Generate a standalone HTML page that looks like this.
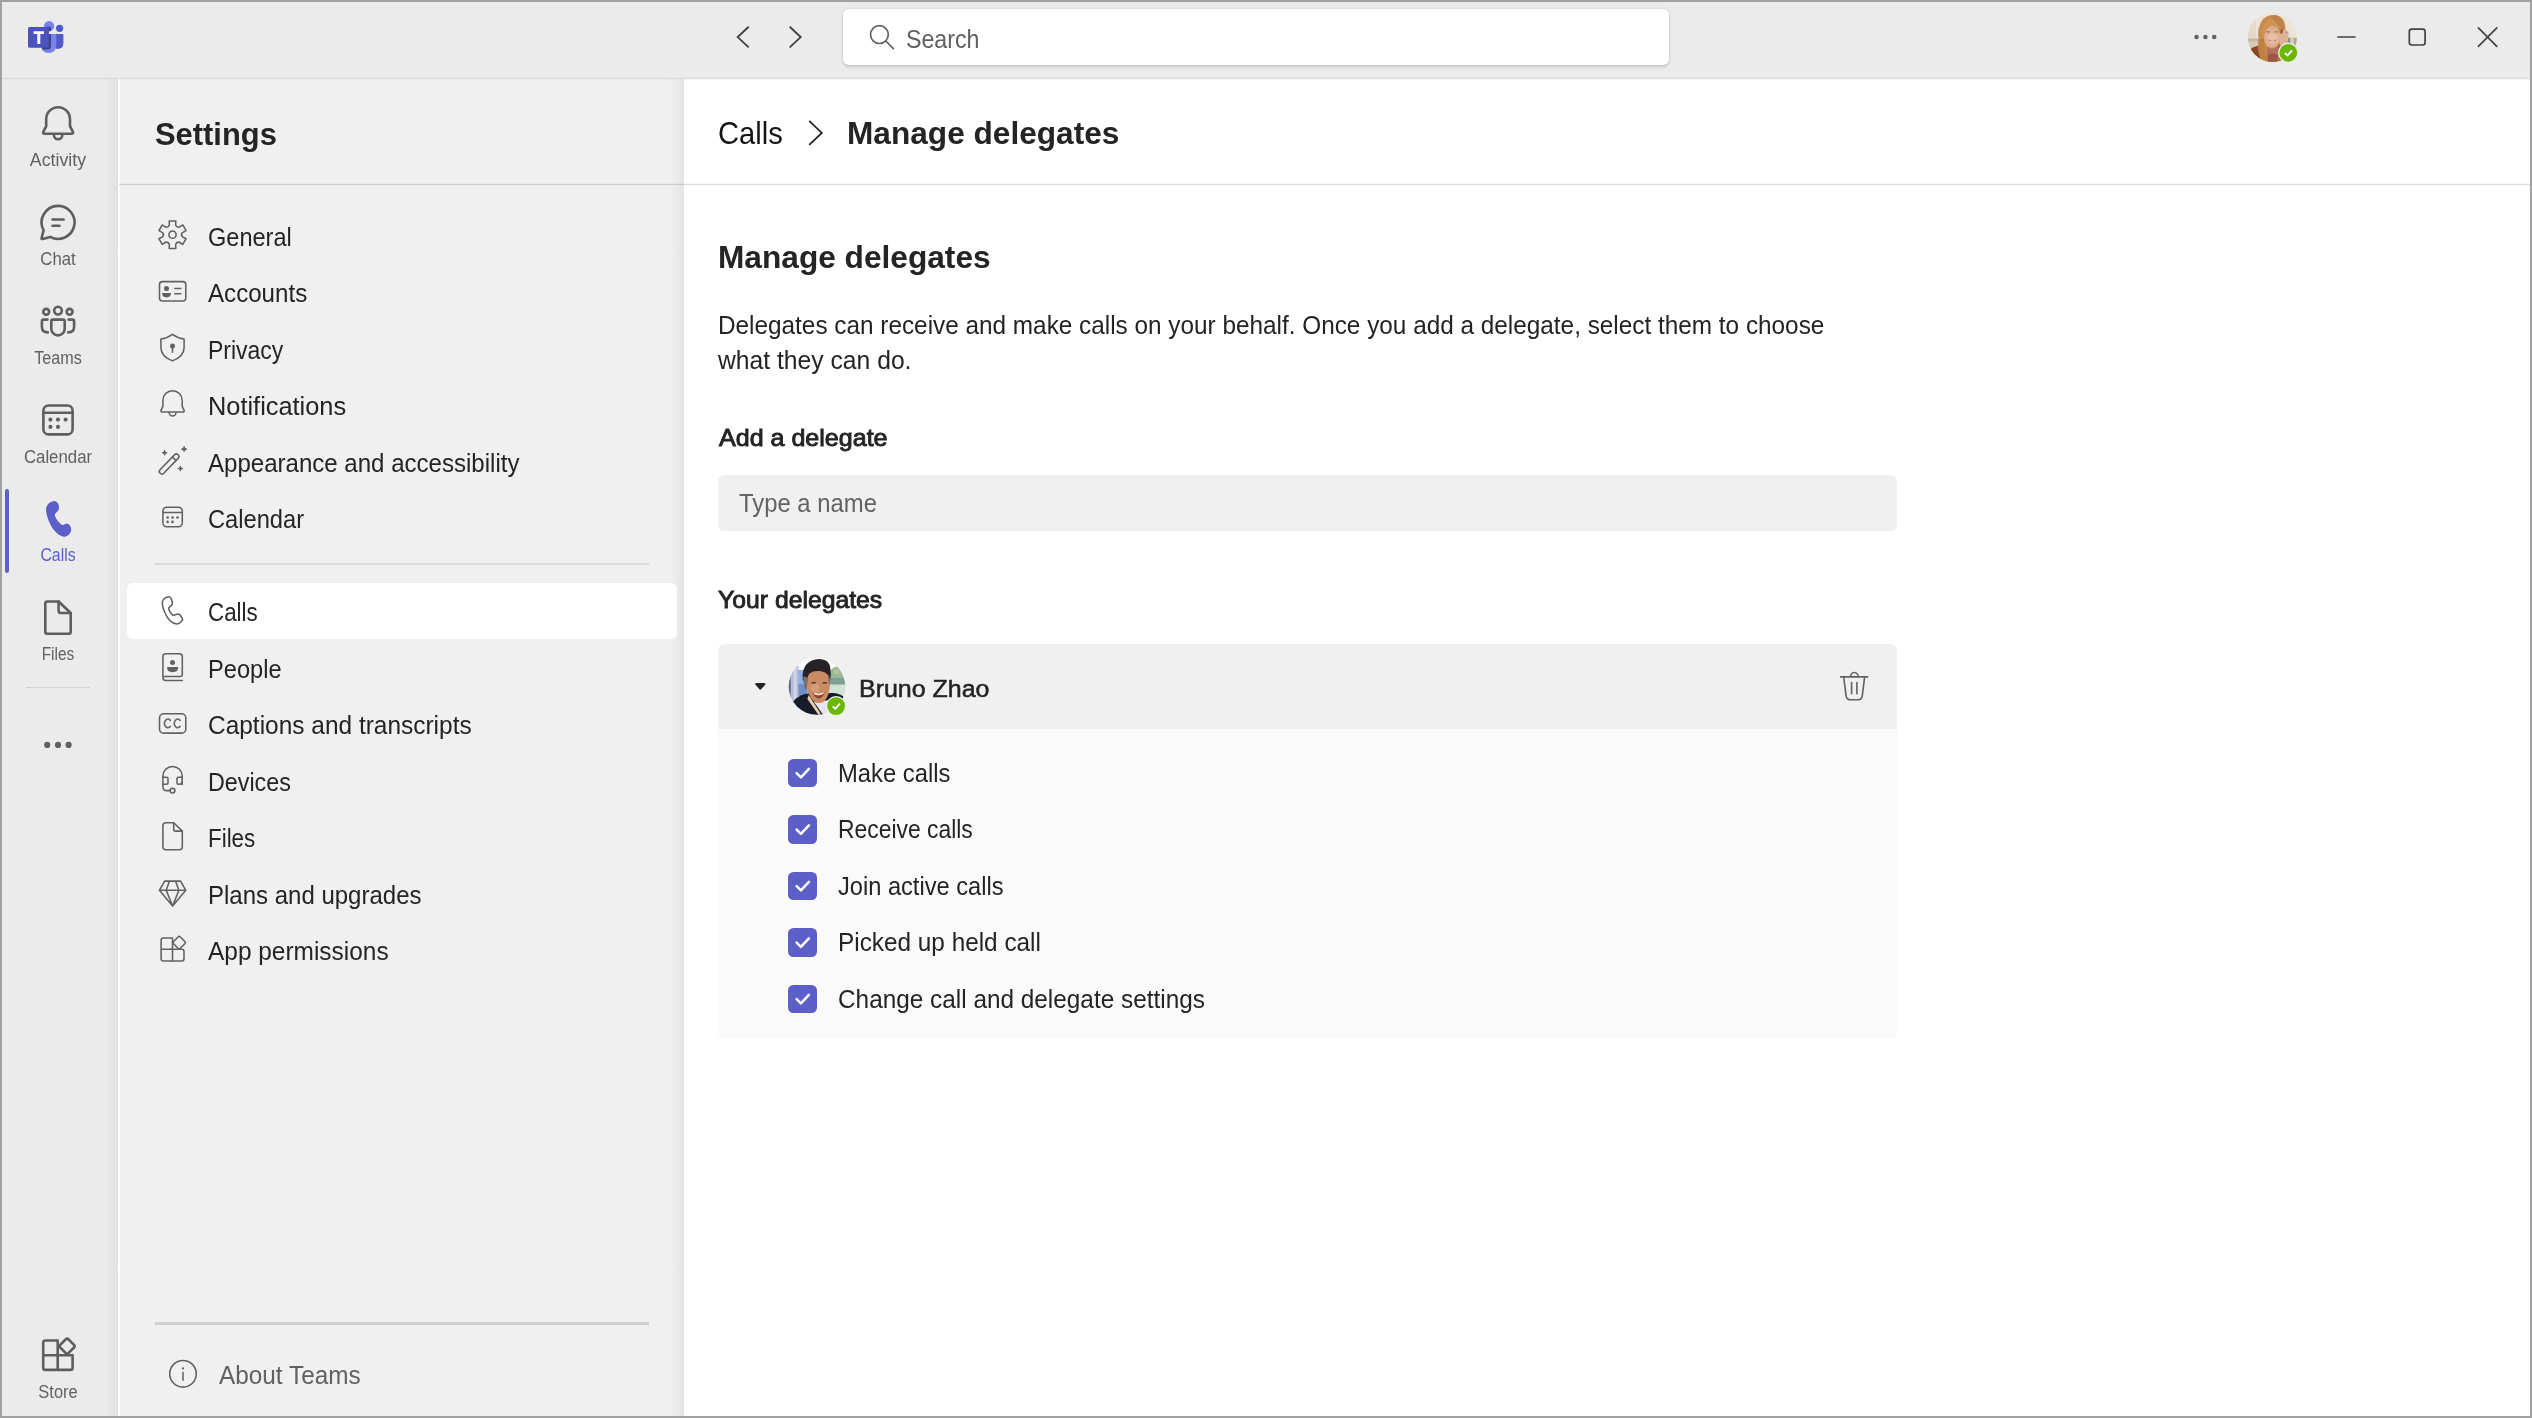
<!DOCTYPE html>
<html><head><meta charset="utf-8"><title>Settings</title>
<style>
html,body{margin:0;padding:0;}
body{width:2532px;height:1418px;overflow:hidden;background:#a1a1a1;font-family:"Liberation Sans",sans-serif;position:relative;}
.t{position:absolute;white-space:nowrap;}
svg{overflow:visible;}
</style></head><body>

<div style="position:absolute;left:2px;top:2px;width:2528px;height:1414px;background:#ebebeb;"></div>
<div style="position:absolute;left:684px;top:79px;width:1846px;height:1337px;background:#ffffff;"></div>
<div style="position:absolute;left:119px;top:79px;width:565.4px;height:1337px;background:#f0f0f0;"></div>
<div style="position:absolute;left:670px;top:79px;width:14.4px;height:1337px;background:linear-gradient(to right, rgba(0,0,0,0) 0%, rgba(0,0,0,0.02) 40%, rgba(0,0,0,0.052) 100%);"></div>
<div style="position:absolute;left:2px;top:79px;width:116px;height:1337px;background:#ebebeb;"></div>
<div style="position:absolute;left:104.5px;top:79px;width:13.3px;height:1337px;background:linear-gradient(to right, rgba(0,0,0,0) 0%, rgba(0,0,0,0.018) 40%, rgba(0,0,0,0.042) 100%);"></div>
<div style="position:absolute;left:117.8px;top:79px;width:2.0px;height:1337px;background:#ffffff;"></div>
<div style="position:absolute;left:2px;top:2px;width:2528px;height:76px;background:#ebebeb;"></div>
<div style="position:absolute;left:2px;top:76.8px;width:2528px;height:3.6px;background:linear-gradient(to bottom, #ebebeb 0%, #e4e4e4 25%, #dddddd 50%, rgba(221,221,221,0.55) 72%, rgba(221,221,221,0) 100%);"></div>
<svg style="position:absolute;left:20px;top:16px;" width="52" height="44" viewBox="20 16 52 44">
<defs><clipPath id="lgc"><rect x="26" y="20" width="40" height="36"/></clipPath></defs>
<circle cx="59.6" cy="28.3" r="3.65" fill="#5059c9"/>
<path d="M55.4 34 H62.2 Q63.4 34 63.4 35.2 V43 Q63.4 48.9 57.6 48.9 Q55.4 48.9 54.2 47.6 Z" fill="#5059c9"/>
<circle cx="49.1" cy="26.2" r="5.15" fill="#7b83eb"/>
<path d="M41 34 H55 Q56.3 34 56.3 35.3 V44.4 Q56.3 52.8 48.6 52.9 Q41 52.8 41 44.4 Z" fill="#7b83eb"/>
<path d="M41 34 H50.9 V47 Q50.9 49.4 48.5 49.4 H42.6 Q41 46.5 41 44.4 Z" fill="#3b3f8c"/>
<path d="M44.5 26.8 H50.9 V30.95 Q49.8 31.4 48.6 31.35 L44.5 31.35 Z" fill="#3b3f8c"/>
<rect x="28" y="26.9" width="20.9" height="20.9" rx="1.7" fill="#4b53bc"/>
<path d="M33.6 31.3 H43.9 V34.1 H40.3 V43.9 H37.3 V34.1 H33.6 Z" fill="#fff"/>
</svg>
<svg style="position:absolute;left:730px;top:20px;" width="80" height="36" viewBox="730 20 80 36"><path d="M748.7 26.8 L737.7 37.1 L748.7 47.4" fill="none" stroke="#424242" stroke-width="1.9" stroke-linejoin="miter"/>
<path d="M789.7 26.8 L800.7 37.1 L789.7 47.4" fill="none" stroke="#424242" stroke-width="1.9" stroke-linejoin="miter"/></svg>
<div style="position:absolute;left:843px;top:9px;width:826px;height:56px;background:#ffffff;border-radius:6px;box-shadow:0 1.2px 3px rgba(0,0,0,0.15),0 0 2.5px rgba(0,0,0,0.11);"></div>
<svg style="position:absolute;left:866px;top:22px;" width="32" height="32" viewBox="866 22 32 32"><circle cx="879.4" cy="34.6" r="8.9" fill="none" stroke="#616161" stroke-width="1.7"/>
<path d="M885.8 41 L893.4 48.6" stroke="#616161" stroke-width="1.7" stroke-linecap="round"/></svg>
<div class="t" style="top:22.94px;left:906.3px;transform-origin:0 50%;font-size:25px;line-height:32px;font-weight:400;color:#616161;transform:scaleX(0.9279);">Search</div>
<svg style="position:absolute;left:2190px;top:30px;" width="30" height="14" viewBox="2190 30 30 14"><circle cx="2196.5" cy="37" r="2.25" fill="#616161"/><circle cx="2205.4" cy="37" r="2.25" fill="#616161"/><circle cx="2214.2" cy="37" r="2.25" fill="#616161"/></svg>
<svg style="position:absolute;left:2244px;top:9px;" width="58" height="58" viewBox="2244 9 58 58">
<defs><clipPath id="av1"><circle cx="2272.4" cy="37.4" r="24.6"/></clipPath>
<filter id="bl1" x="-20%" y="-20%" width="140%" height="140%"><feGaussianBlur stdDeviation="0.55"/></filter><filter id="bl1b" x="-20%" y="-20%" width="140%" height="140%"><feGaussianBlur stdDeviation="0.3"/></filter></defs>
<g clip-path="url(#av1)">
<rect x="2246" y="11" width="54" height="54" fill="#ede4d9"/>
<g filter="url(#bl1)">
<rect x="2246" y="11" width="10" height="30" fill="#e4dacc"/>
<rect x="2246" y="38.5" width="54" height="3.2" fill="#c6b59f"/>
<rect x="2246" y="41.7" width="54" height="24" fill="#d8cab7"/>
<rect x="2284" y="37.5" width="14" height="9" fill="#cfc3b0"/>
<rect x="2284.6" y="39" width="2.2" height="6.5" fill="#cf4f78"/>
<rect x="2287.6" y="38" width="2.6" height="8" fill="#8f8f86"/>
<rect x="2291" y="38" width="2.4" height="8" fill="#d8cdbd"/>
<rect x="2294" y="38" width="2.6" height="8" fill="#b6a78f"/>
<path d="M2249 50 Q2256 45 2263 45.4 L2284 46 Q2292 50 2294 66 L2247 66 Z" fill="#8a4628"/>
<path d="M2263 19 Q2271 12.6 2280 16.6 Q2286.4 21 2285.4 31 L2284.6 46 Q2283 55 2283 63 L2262 63 Q2257.6 52 2258.6 41 Q2256.6 27 2263 19 Z" fill="#c98c4f"/>
<path d="M2258.4 40 Q2257 52 2262 62 L2268.4 62 Q2263.8 50 2264.6 38 Z" fill="#bd8144"/>
<path d="M2279 44 Q2283 50 2283 62 L2278 62 Q2280 52 2277 47 Z" fill="#a86a36"/>
<path d="M2267.4 47 Q2272.6 50.6 2277.8 46.6 L2278.4 54 Q2278.4 62 2272 62.6 Q2266.8 62 2266.8 55 Z" fill="#b4705a"/>
<path d="M2268 55 Q2272 52 2277.6 55 L2277.6 63 L2268 63 Z" fill="#9b5440"/>
<ellipse cx="2272" cy="36.6" rx="8.2" ry="11.2" fill="#dfae90"/>
<ellipse cx="2272.6" cy="38.5" rx="5.2" ry="5" fill="#e8bfa6"/>
<path d="M2262.4 33 Q2263 21 2272 18.6 Q2282 17.4 2284.6 26 Q2285.4 30 2283.6 33.4 Q2279 26.4 2272.6 26 Q2266.4 26.4 2264.4 36 Z" fill="#cf9352"/>
<path d="M2270 16 Q2274.4 20 2282 30 L2284.6 28 Q2283 18 2276 15 Z" fill="#bd8246"/>
<ellipse cx="2283.8" cy="37.8" rx="4.4" ry="8" transform="rotate(14 2283.8 37.8)" fill="#dfb196"/>
</g><g filter="url(#bl1b)"><ellipse cx="2281.6" cy="31.4" rx="1.2" ry="2.4" fill="#8a5638"/>
<rect x="2285.4" y="31.4" width="3.2" height="1.6" rx="0.8" fill="#a3a3a3"/>
<rect x="2266.4" y="31.3" width="3.2" height="1.1" rx="0.55" fill="#8d7766"/>
<rect x="2275" y="31.3" width="3.2" height="1.1" rx="0.55" fill="#8d7766"/>
<path d="M2268.8 40.2 Q2272.4 43 2276 40.2 Q2272.4 41.4 2268.8 40.2 Z" fill="#b96058" stroke="#b96058" stroke-width="0.7"/>
<rect x="2270" y="40.5" width="4.8" height="1.1" rx="0.55" fill="#f4e6e0"/>
</g></g><circle cx="2288.3" cy="52.8" r="10.2" fill="#ebebeb"/><circle cx="2288.3" cy="52.8" r="8.9" fill="#6bb700"/><path d="M2285.40 53.50 L2287.50 55.50 L2291.60 50.90" fill="none" stroke="#fff" stroke-width="1.8" stroke-linecap="round" stroke-linejoin="round"/></svg>
<svg style="position:absolute;left:2330px;top:20px;" width="176" height="36" viewBox="2330 20 176 36"><path d="M2338 37 H2355" stroke="#424242" stroke-width="1.7" stroke-linecap="round"/>
<rect x="2409.3" y="29.2" width="15.8" height="15.8" rx="2.4" fill="none" stroke="#424242" stroke-width="1.7"/>
<path d="M2478.4 27.9 L2496.8 46.3 M2496.8 27.9 L2478.4 46.3" stroke="#424242" stroke-width="1.7" stroke-linecap="round"/></svg>
<svg style="position:absolute;left:38px;top:102px;" width="40" height="42" viewBox="38 102 40 42"><path d="M46.2 126.2 V119.1 A11.9 11.9 0 0 1 70 119.1 V126.2 L72.9 131.9 Q73.5 133.8 71.6 133.8 H44.6 Q42.7 133.8 43.3 131.9 Z" fill="none" stroke="#5e5e5e" stroke-width="2.6" stroke-linejoin="round" stroke-linecap="round"/><path d="M53.9 135 A4.2 4.2 0 0 0 62.3 135" fill="none" stroke="#5e5e5e" stroke-width="2.6" stroke-linejoin="round" stroke-linecap="round"/></svg>
<div class="t" style="top:149.14px;left:-142px;width:400px;text-align:center;transform-origin:50% 50%;font-size:17.5px;line-height:23px;font-weight:400;color:#616161;transform:scaleX(1.016);">Activity</div>
<svg style="position:absolute;left:38px;top:202px;" width="40" height="42" viewBox="38 202 40 42"><path d="M58 205.9 A16.5 16.5 0 1 1 50.2 236.9 L42.6 238.9 Q41.2 239.2 41.6 237.8 L43.6 230.3 A16.5 16.5 0 0 1 58 205.9 Z" fill="none" stroke="#5e5e5e" stroke-width="2.6" stroke-linejoin="round" stroke-linecap="round"/><path d="M52.5 219.5 H63.6 M52.5 225.7 H59.4" fill="none" stroke="#5e5e5e" stroke-width="2.6" stroke-linejoin="round" stroke-linecap="round"/></svg>
<div class="t" style="top:248.04px;left:-141.8px;width:400px;text-align:center;transform-origin:50% 50%;font-size:17.5px;line-height:23px;font-weight:400;color:#616161;transform:scaleX(0.955);">Chat</div>
<svg style="position:absolute;left:38px;top:304px;" width="40" height="36" viewBox="38 304 40 36"><circle cx="58" cy="310.6" r="3.85" fill="none" stroke="#5e5e5e" stroke-width="2.6" stroke-linejoin="round" stroke-linecap="round"/><circle cx="46.2" cy="311.8" r="2.95" fill="none" stroke="#5e5e5e" stroke-width="2.6" stroke-linejoin="round" stroke-linecap="round"/><circle cx="69.6" cy="311.8" r="2.95" fill="none" stroke="#5e5e5e" stroke-width="2.6" stroke-linejoin="round" stroke-linecap="round"/><path d="M52.9 319.6 H63.1 Q64.7 319.6 64.7 321.2 V328.7 A6.7 6.7 0 0 1 51.3 328.7 V321.2 Q51.3 319.6 52.9 319.6 Z" fill="none" stroke="#5e5e5e" stroke-width="2.6" stroke-linejoin="round" stroke-linecap="round"/><path d="M47.4 319.6 H43.5 Q41.9 319.6 41.9 321.2 V326.5 Q41.9 332.4 47.8 332.4" fill="none" stroke="#5e5e5e" stroke-width="2.6" stroke-linejoin="round" stroke-linecap="round"/><path d="M68.6 319.6 H72.5 Q74.1 319.6 74.1 321.2 V326.5 Q74.1 332.4 68.2 332.4" fill="none" stroke="#5e5e5e" stroke-width="2.6" stroke-linejoin="round" stroke-linecap="round"/></svg>
<div class="t" style="top:346.64px;left:-142.2px;width:400px;text-align:center;transform-origin:50% 50%;font-size:17.5px;line-height:23px;font-weight:400;color:#616161;transform:scaleX(0.923);">Teams</div>
<svg style="position:absolute;left:38px;top:400px;" width="40" height="40" viewBox="38 400 40 40"><rect x="43.4" y="405.5" width="29.2" height="28.9" rx="5.2" fill="none" stroke="#5e5e5e" stroke-width="2.6" stroke-linejoin="round" stroke-linecap="round"/><path d="M43.4 412.7 H72.6" fill="none" stroke="#5e5e5e" stroke-width="2.6" stroke-linejoin="round" stroke-linecap="round"/><circle cx="50.4" cy="419.6" r="2.05" fill="#5e5e5e"/><circle cx="58" cy="419.6" r="2.05" fill="#5e5e5e"/><circle cx="65.6" cy="419.6" r="2.05" fill="#5e5e5e"/><circle cx="50.4" cy="426.9" r="2.05" fill="#5e5e5e"/><circle cx="58" cy="426.9" r="2.05" fill="#5e5e5e"/></svg>
<div class="t" style="top:445.74px;left:-142.1px;width:400px;text-align:center;transform-origin:50% 50%;font-size:17.5px;line-height:23px;font-weight:400;color:#616161;transform:scaleX(0.96);">Calendar</div>
<div style="position:absolute;left:5px;top:489px;width:3.8px;height:84px;background:#5b5fc7;border-radius:2px;"></div>
<svg style="position:absolute;left:42px;top:498px;" width="34" height="42" viewBox="42 498 34 42"><path d="M52.3 501.4 C55.4 500.4 58.0 502.2 58.8 505.6 C59.5 508.4 58.6 510.6 56.6 512.2 C54.6 513.8 54.6 515.2 55.4 517.0 C56.6 519.6 58.8 522.4 61.4 524.4 C62.6 525.3 63.6 525.0 64.6 524.2 C66.6 522.6 68.8 523.4 70.2 526.0 C71.7 528.8 71.6 531.2 70.0 533.2 C68.0 536.0 65.0 537.4 62.0 536.2 C54.8 533.4 48.4 524.0 46.2 512.2 C45.4 507.0 47.4 503.0 52.3 501.4 Z" fill="#5b5fc7"/></svg>
<div class="t" style="top:544.14px;left:-142px;width:400px;text-align:center;transform-origin:50% 50%;font-size:17.5px;line-height:23px;font-weight:400;color:#5b5fc7;transform:scaleX(0.905);">Calls</div>
<svg style="position:absolute;left:40px;top:598px;" width="36" height="40" viewBox="40 598 36 40"><path d="M47.4 601.5 H58.6 L70.7 613 V631.7 Q70.7 633.8 68.6 633.8 H47.4 Q45.3 633.8 45.3 631.7 V603.6 Q45.3 601.5 47.4 601.5 Z" fill="none" stroke="#5e5e5e" stroke-width="2.6" stroke-linejoin="round" stroke-linecap="round"/><path d="M58.6 601.5 V610.4 Q58.6 613 61.2 613 H70.7" fill="none" stroke="#5e5e5e" stroke-width="2.6" stroke-linejoin="round" stroke-linecap="round"/></svg>
<div class="t" style="top:643.14px;left:-141.8px;width:400px;text-align:center;transform-origin:50% 50%;font-size:17.5px;line-height:23px;font-weight:400;color:#616161;transform:scaleX(0.885);">Files</div>
<div style="position:absolute;left:26px;top:686.5px;width:63.6px;height:1.6px;background:#d4d4d4;"></div>
<svg style="position:absolute;left:40px;top:738px;" width="36" height="14" viewBox="40 738 36 14"><circle cx="47.2" cy="744.9" r="3.1" fill="#616161"/><circle cx="58" cy="744.9" r="3.1" fill="#616161"/><circle cx="68.6" cy="744.9" r="3.1" fill="#616161"/></svg>
<svg style="position:absolute;left:38px;top:1334px;" width="42" height="40" viewBox="38 1334 42 40"><path d="M57.7 1340.5 H45.4 Q43.2 1340.5 43.2 1342.7 V1367.7 Q43.2 1369.9 45.4 1369.9 H70.4 Q72.6 1369.9 72.6 1367.7 V1355.2 H43.2 M57.7 1340.5 V1369.9" fill="none" stroke="#5e5e5e" stroke-width="2.6" stroke-linejoin="round" stroke-linecap="round"/><rect x="61.3" y="1340.4" width="11.6" height="11.6" rx="1.8" transform="rotate(45 67.1 1346.2)" fill="none" stroke="#5e5e5e" stroke-width="2.6" stroke-linejoin="round" stroke-linecap="round"/></svg>
<div class="t" style="top:1381.04px;left:-142px;width:400px;text-align:center;transform-origin:50% 50%;font-size:17.5px;line-height:23px;font-weight:400;color:#616161;transform:scaleX(0.94);">Store</div>
<div class="t" style="top:113.59px;left:154.6px;transform-origin:0 50%;font-size:31.5px;line-height:41px;font-weight:700;color:#242424;transform:scaleX(0.9804);">Settings</div>
<div style="position:absolute;left:119px;top:183.0px;width:2411px;height:3.2px;background:linear-gradient(to bottom, rgba(0,0,0,0) 0%, rgba(0,0,0,0.04) 25%, rgba(0,0,0,0.13) 50%, rgba(0,0,0,0.04) 75%, rgba(0,0,0,0) 100%);"></div>
<div style="position:absolute;left:127px;top:582.5px;width:550px;height:56px;background:#ffffff;border-radius:6px;"></div>
<div style="position:absolute;left:155px;top:563px;width:494px;height:1.5px;background:#dcdcdc;"></div>
<div style="position:absolute;left:155px;top:1321.8px;width:494px;height:3.2px;background:#d1d1d1;"></div>
<div class="t" style="top:220.94px;left:207.5px;transform-origin:0 50%;font-size:25px;line-height:32px;font-weight:400;color:#242424;transform:scaleX(0.9415);">General</div>
<div class="t" style="top:277.44px;left:207.5px;transform-origin:0 50%;font-size:25px;line-height:32px;font-weight:400;color:#242424;transform:scaleX(0.9645);">Accounts</div>
<div class="t" style="top:333.94px;left:207.5px;transform-origin:0 50%;font-size:25px;line-height:32px;font-weight:400;color:#242424;transform:scaleX(0.9195);">Privacy</div>
<div class="t" style="top:390.44px;left:207.5px;transform-origin:0 50%;font-size:25px;line-height:32px;font-weight:400;color:#242424;transform:scaleX(1.0145);">Notifications</div>
<div class="t" style="top:446.94px;left:207.5px;transform-origin:0 50%;font-size:25px;line-height:32px;font-weight:400;color:#242424;transform:scaleX(0.9619);">Appearance and accessibility</div>
<div class="t" style="top:503.44px;left:207.5px;transform-origin:0 50%;font-size:25px;line-height:32px;font-weight:400;color:#242424;transform:scaleX(0.9468);">Calendar</div>
<div class="t" style="top:596.34px;left:207.5px;transform-origin:0 50%;font-size:25px;line-height:32px;font-weight:400;color:#242424;transform:scaleX(0.8932);">Calls</div>
<div class="t" style="top:652.84px;left:207.5px;transform-origin:0 50%;font-size:25px;line-height:32px;font-weight:400;color:#242424;transform:scaleX(0.9448);">People</div>
<div class="t" style="top:709.34px;left:207.5px;transform-origin:0 50%;font-size:25px;line-height:32px;font-weight:400;color:#242424;transform:scaleX(0.978);">Captions and transcripts</div>
<div class="t" style="top:765.84px;left:207.5px;transform-origin:0 50%;font-size:25px;line-height:32px;font-weight:400;color:#242424;transform:scaleX(0.9313);">Devices</div>
<div class="t" style="top:822.34px;left:207.5px;transform-origin:0 50%;font-size:25px;line-height:32px;font-weight:400;color:#242424;transform:scaleX(0.8949);">Files</div>
<div class="t" style="top:878.84px;left:207.5px;transform-origin:0 50%;font-size:25px;line-height:32px;font-weight:400;color:#242424;transform:scaleX(0.9601);">Plans and upgrades</div>
<div class="t" style="top:935.34px;left:207.5px;transform-origin:0 50%;font-size:25px;line-height:32px;font-weight:400;color:#242424;transform:scaleX(0.9774);">App permissions</div>
<div class="t" style="top:1358.74px;left:219.4px;transform-origin:0 50%;font-size:25px;line-height:32px;font-weight:400;color:#616161;transform:scaleX(0.9739);">About Teams</div>
<svg style="position:absolute;left:150px;top:210px;" width="50" height="1190" viewBox="150 210 50 1190"><path d="M175.80 220.94 L169.20 220.94 L169.35 225.00 Q168.50 227.77 165.67 227.12 L162.24 224.96 L158.93 230.68 L162.52 232.58 Q164.50 234.70 162.52 236.82 L158.93 238.72 L162.24 244.44 L165.67 242.28 Q168.50 241.63 169.35 244.40 L169.20 248.46 L175.80 248.46 L175.65 244.40 Q176.50 241.63 179.33 242.28 L182.76 244.44 L186.07 238.72 L182.48 236.82 Q180.50 234.70 182.48 232.58 L186.07 230.68 L182.76 224.96 L179.33 227.12 Q176.50 227.77 175.65 225.00 L175.80 220.94 Z" fill="none" stroke="#616161" stroke-width="1.55" stroke-linejoin="round" stroke-linecap="round"/><circle cx="172.5" cy="234.7" r="3.6" fill="none" stroke="#616161" stroke-width="1.55" stroke-linejoin="round" stroke-linecap="round"/><rect x="159.5" y="281.6" width="26.3" height="19.3" rx="3" fill="none" stroke="#616161" stroke-width="1.55" stroke-linejoin="round" stroke-linecap="round"/><circle cx="166.5" cy="288.4" r="2.5" fill="#616161"/><path d="M162.1 293.1 H170.9 Q171.1 297.4 166.5 297.4 Q161.9 297.4 162.1 293.1 Z" fill="#616161"/><path d="M174.8 288.5 H180.8 M174.8 293.8 H180.8" fill="none" stroke="#616161" stroke-width="1.55" stroke-linejoin="round" stroke-linecap="round"/><path d="M172.5 334.3 C168.6 337.2 164.8 338.5 160.9 338.9 V347.4 C160.9 353.4 165.4 358 172.5 360.9 C179.6 358 184.1 353.4 184.1 347.4 V338.9 C180.2 338.5 176.4 337.2 172.5 334.3 Z" fill="none" stroke="#616161" stroke-width="1.55" stroke-linejoin="round" stroke-linecap="round"/><circle cx="172.5" cy="345.9" r="2.5" fill="#616161"/><path d="M172.5 346 V352.3" fill="none" stroke="#616161" stroke-width="1.55" stroke-linejoin="round" stroke-linecap="round"/><path d="M162.9 406.3 V400.3 A9.65 9.65 0 0 1 182.2 400.3 V406.3 L184.1 410.4 Q184.6 411.9 183.1 411.9 H162 Q160.5 411.9 161 410.4 Z" fill="none" stroke="#616161" stroke-width="1.55" stroke-linejoin="round" stroke-linecap="round"/><path d="M169.1 412.6 A3.45 3.45 0 0 0 176 412.6" fill="none" stroke="#616161" stroke-width="1.55" stroke-linejoin="round" stroke-linecap="round"/><g transform="rotate(-45.9 169.1 464.05)"><rect x="156.2" y="461.5" width="25.8" height="5.1" rx="2.55" fill="none" stroke="#616161" stroke-width="1.55" stroke-linejoin="round" stroke-linecap="round"/><path d="M176.4 461.5 V466.6" fill="none" stroke="#616161" stroke-width="1.55" stroke-linejoin="round" stroke-linecap="round"/></g><path d="M164.6 450.4 Q164.6 452.7 166.9 452.7 Q164.6 452.7 164.6 455.0 Q164.6 452.7 162.29999999999998 452.7 Q164.6 452.7 164.6 450.4 Z" fill="#616161" stroke="#616161" stroke-width="1.1" stroke-linejoin="round"/><path d="M184.1 446.6 Q184.1 449.1 186.6 449.1 Q184.1 449.1 184.1 451.6 Q184.1 449.1 181.6 449.1 Q184.1 449.1 184.1 446.6 Z" fill="#616161" stroke="#616161" stroke-width="1.1" stroke-linejoin="round"/><path d="M180.4 466.2 Q180.4 468.5 182.70000000000002 468.5 Q180.4 468.5 180.4 470.8 Q180.4 468.5 178.1 468.5 Q180.4 468.5 180.4 466.2 Z" fill="#616161" stroke="#616161" stroke-width="1.1" stroke-linejoin="round"/><rect x="162.9" y="507.2" width="19.4" height="19.6" rx="4" fill="none" stroke="#616161" stroke-width="1.55" stroke-linejoin="round" stroke-linecap="round"/><path d="M162.9 512.4 H182.3" fill="none" stroke="#616161" stroke-width="1.55" stroke-linejoin="round" stroke-linecap="round"/><circle cx="167.6" cy="517.5" r="1.3" fill="#616161"/><circle cx="172.5" cy="517.5" r="1.3" fill="#616161"/><circle cx="177.5" cy="517.5" r="1.3" fill="#616161"/><circle cx="167.6" cy="521.9" r="1.3" fill="#616161"/><circle cx="172.5" cy="521.9" r="1.3" fill="#616161"/><path d="M168.1 596.9 C169.6 596.6 170.6 597.4 171.2 598.8 L172.2 601.6 C172.8 603.4 172.4 604.6 171 605.8 L169.2 607.4 C168.6 608 168.6 608.6 168.9 609.4 C169.8 611.8 171 613.6 172.4 614.8 C173 615.3 173.6 615.3 174.4 615 L176.8 614.2 C178.2 613.7 179.2 614 180 615 L182 617.8 C182.8 619 182.6 620.2 181.6 621.2 C180 623 178.4 624 176.8 624 C172.4 623.8 167.6 619 164.6 612 C162.6 607.2 161.8 603.4 162.6 601 C163.4 598.8 165.4 597.4 168.1 596.9 Z" fill="none" stroke="#616161" stroke-width="1.55" stroke-linejoin="round" stroke-linecap="round"/><path d="M162.9 677.4 V656.7 Q162.9 653.7 165.9 653.7 H179.3 Q182.3 653.7 182.3 656.7 V674.5 Q182.3 676.5 180.3 676.5 H162.9 M162.9 676.5 V677.4 Q162.9 680.4 165.9 680.4 H182.3" fill="none" stroke="#616161" stroke-width="1.55" stroke-linejoin="round" stroke-linecap="round"/><circle cx="172.5" cy="662.6" r="2.5" fill="#616161"/><path d="M167 667 H178.2 Q178.4 672.2 172.6 672.2 Q166.8 672.2 167 667 Z" fill="#616161"/><rect x="159.5" y="713.8" width="26.3" height="19.3" rx="4.2" fill="none" stroke="#616161" stroke-width="1.55" stroke-linejoin="round" stroke-linecap="round"/><path d="M170.4 720.5 A3.3 4.4 0 1 0 170.4 726.3 M180.2 720.5 A3.3 4.4 0 1 0 180.2 726.3" fill="none" stroke="#616161" stroke-width="1.55" stroke-linejoin="round" stroke-linecap="round"/><path d="M182.2 784.6 V776.1 A9.65 9.65 0 0 0 162.9 776.1 V786.4 Q162.9 790.6 167.1 790.6 H170.1" fill="none" stroke="#616161" stroke-width="1.55" stroke-linejoin="round" stroke-linecap="round"/><circle cx="172.5" cy="790.6" r="2.4" fill="none" stroke="#616161" stroke-width="1.55" stroke-linejoin="round" stroke-linecap="round"/><path d="M162.9 777.3 H166.6 Q168 777.3 168 778.7 V782.8 Q168 784.2 166.6 784.2 H162.9 M182.2 777.3 H178.4 Q177 777.3 177 778.7 V782.8 Q177 784.2 178.4 784.2 H179.6 Q182.2 784.2 182.2 781.6" fill="none" stroke="#616161" stroke-width="1.55" stroke-linejoin="round" stroke-linecap="round"/><path d="M165.9 822.7 H173.7 L182.3 831.1 V846.7 Q182.3 849.7 179.3 849.7 H165.9 Q162.9 849.7 162.9 846.7 V825.7 Q162.9 822.7 165.9 822.7 Z" fill="none" stroke="#616161" stroke-width="1.55" stroke-linejoin="round" stroke-linecap="round"/><path d="M173.7 822.7 V829.3 Q173.7 831.1 175.5 831.1 H182.3" fill="none" stroke="#616161" stroke-width="1.55" stroke-linejoin="round" stroke-linecap="round"/><path d="M164.6 881.1 H180.6 L185.8 890.3 L172.6 906 L159.4 890.3 Z M159.4 890.3 H185.8 M169.5 881.1 L166.2 890.3 L172.6 906 L178.9 890.3 L175.5 881.1" fill="none" stroke="#616161" stroke-width="1.55" stroke-linejoin="round" stroke-linecap="round"/><path d="M172.5 938 H163.3 Q161.1 938 161.1 940.2 V958.7 Q161.1 960.9 163.3 960.9 H181.8 Q184 960.9 184 958.7 V951.5 Q184 949.3 181.8 949.3 H161.1 M172.5 938 V960.9" fill="none" stroke="#616161" stroke-width="1.55" stroke-linejoin="round" stroke-linecap="round"/><rect x="174.4" y="937.8" width="9.6" height="9.6" rx="1.6" transform="rotate(45 179.2 942.6)" fill="none" stroke="#616161" stroke-width="1.55" stroke-linejoin="round" stroke-linecap="round"/><circle cx="183" cy="1373.8" r="13.3" fill="none" stroke="#616161" stroke-width="1.55" stroke-linejoin="round" stroke-linecap="round"/><circle cx="183" cy="1368.4" r="1.15" fill="#616161"/><path d="M183 1372.6 V1380.2" fill="none" stroke="#616161" stroke-width="1.55" stroke-linejoin="round" stroke-linecap="round"/></svg>
<div class="t" style="top:113.19px;left:718.3px;transform-origin:0 50%;font-size:31.5px;line-height:41px;font-weight:400;color:#141414;transform:scaleX(0.9259);">Calls</div>
<svg style="position:absolute;left:804px;top:116px;" width="24" height="34" viewBox="804 116 24 34"><path d="M809.2 120.9 L821.8 132.9 L809.2 144.9" fill="none" stroke="#242424" stroke-width="1.8" stroke-linejoin="miter"/></svg>
<div class="t" style="top:113.19px;left:846.6px;transform-origin:0 50%;font-size:31.5px;line-height:41px;font-weight:700;color:#242424;transform:scaleX(1.0039);">Manage delegates</div>
<div class="t" style="top:236.89px;left:718.3px;transform-origin:0 50%;font-size:31.5px;line-height:41px;font-weight:700;color:#242424;transform:scaleX(1.0046);">Manage delegates</div>
<div class="t" style="top:309.14px;left:718.3px;transform-origin:0 50%;font-size:25px;line-height:32px;font-weight:400;color:#242424;transform:scaleX(0.9732);">Delegates can receive and make calls on your behalf. Once you add a delegate, select them to choose</div>
<div class="t" style="top:344.14px;left:718.3px;transform-origin:0 50%;font-size:25px;line-height:32px;font-weight:400;color:#242424;transform:scaleX(0.9873);">what they can do.</div>
<div class="t" style="top:422.31px;left:718.6px;transform-origin:0 50%;font-size:24.5px;line-height:32px;font-weight:400;color:#242424;transform:scaleX(1.0224);-webkit-text-stroke:0.9px #242424;">Add a delegate</div>
<div style="position:absolute;left:718px;top:474.6px;width:1179px;height:56px;background:#f0f0f0;border-radius:6px;"></div>
<div class="t" style="top:487.14px;left:738.5px;transform-origin:0 50%;font-size:25px;line-height:32px;font-weight:400;color:#636363;transform:scaleX(0.9545);">Type a name</div>
<div class="t" style="top:584.31px;left:718.3px;transform-origin:0 50%;font-size:24.5px;line-height:32px;font-weight:400;color:#242424;transform:scaleX(1.0102);-webkit-text-stroke:0.9px #242424;">Your delegates</div>
<div style="position:absolute;left:718px;top:644.2px;width:1179px;height:395px;background:#fafafa;border-radius:7px;"></div>
<div style="position:absolute;left:718px;top:644.2px;width:1179px;height:84.6px;background:#f0f0f0;border-radius:7px 7px 0 0;"></div>
<svg style="position:absolute;left:752px;top:680px;" width="18" height="14" viewBox="752 680 18 14"><path d="M756.3 684 H764.3 L760.3 688.6 Z" fill="#242424" stroke="#242424" stroke-width="2.2" stroke-linejoin="round"/></svg>
<svg style="position:absolute;left:786px;top:656px;" width="64" height="64" viewBox="786 656 64 64">
<defs><clipPath id="av2"><circle cx="817" cy="686.5" r="28.3"/></clipPath>
<filter id="bl2" x="-20%" y="-20%" width="140%" height="140%"><feGaussianBlur stdDeviation="0.6"/></filter><filter id="bl2b" x="-20%" y="-20%" width="140%" height="140%"><feGaussianBlur stdDeviation="0.3"/></filter></defs>
<g clip-path="url(#av2)">
<rect x="786" y="656" width="62" height="62" fill="#e6efe9"/>
<g filter="url(#bl2)">
<rect x="786" y="656" width="62" height="16" fill="#fbfcf9"/>
<rect x="797" y="670" width="12" height="26" fill="#8fb0e2"/>
<rect x="797" y="684" width="10" height="12" fill="#6f8fc6"/>
<rect x="790" y="666" width="8.5" height="44" fill="#b4badb"/>
<rect x="793.6" y="664" width="3" height="46" fill="#d2d5e6"/>
<rect x="786" y="674" width="4.6" height="36" fill="#55607c"/>
<path d="M833 668 Q840 664 846 674 L846 686 L829 686 L829 675 Q830 670 833 668 Z" fill="#9db79b"/>
<rect x="829" y="678" width="18" height="7" fill="#7f9f95"/>
<rect x="829" y="684.5" width="18" height="13" fill="#cfe2d3"/>
<rect x="834" y="670" width="5" height="4" fill="#b6c79a"/>
<path d="M792 703 Q799 693.6 810 693.6 L834 693 Q842 694 846 699 L848 718 L790 718 Z" fill="#171c2b"/>
<path d="M814 702 L824 716 L836 716 L830 700 Z" fill="#e8e3f0"/>
<path d="M808.6 695 L820.6 713.4 L818.6 715 L807.4 699 Z" fill="#e6cfa8"/>
<path d="M806.6 680 Q806 672 813 670 L826 670 Q830.6 672 830 682 Q830 696 824 701.4 Q819 704.6 814 701.4 Q807 696 806.6 680 Z" fill="#c98b63"/>
<ellipse cx="815" cy="688" rx="4.5" ry="5" fill="#d59c74"/>
<path d="M802.8 680 Q801 663 815 659.4 Q829.6 657 830.4 669 Q831.6 676 829.6 681 Q829 674.4 825 672.4 Q816 669 809.4 673.4 Q807 677 807 684 Z" fill="#282327"/>
<path d="M803.4 676 Q803 686 806.4 691 L808 678 Z" fill="#77716f"/>
<path d="M829 674 Q831 680 829.4 686 L828 676 Z" fill="#6a6564"/>
</g><g filter="url(#bl2b)"><rect x="811.4" y="682.2" width="4.6" height="1.4" rx="0.7" fill="#3b2a22"/>
<rect x="822.6" y="682.2" width="4.6" height="1.4" rx="0.7" fill="#3b2a22"/>
<path d="M812.6 692.6 Q818.6 697.6 825 692 Q822.6 698.4 818.6 698.4 Q814.6 698 812.6 692.6 Z" fill="#8a3f36"/>
<path d="M814 693.6 Q818.6 696.4 823.6 693.2 Q818.6 695 814 693.6 Z" fill="#f6eae2" stroke="#f6eae2" stroke-width="0.9"/>
</g></g><circle cx="836.1" cy="706.1" r="10.2" fill="#f0f0f0"/><circle cx="836.1" cy="706.1" r="8.9" fill="#6bb700"/><path d="M833.20 706.80 L835.30 708.80 L839.40 704.20" fill="none" stroke="#fff" stroke-width="1.8" stroke-linecap="round" stroke-linejoin="round"/></svg>
<div class="t" style="top:672.51px;left:858.85px;transform-origin:0 50%;font-size:24.5px;line-height:32px;font-weight:400;color:#242424;transform:scaleX(1.0194);-webkit-text-stroke:0.55px #242424;">Bruno Zhao</div>
<svg style="position:absolute;left:1836px;top:668px;" width="36" height="36" viewBox="1836 668 36 36"><path d="M1840.6 676.9 H1867.6 M1850.5 676.9 A3.85 4.4 0 0 1 1858.2 676.9 M1843.7 676.9 L1846.1 695.8 Q1846.7 699.8 1850.7 699.8 H1857.7 Q1861.7 699.8 1862.3 695.8 L1864.6 676.9 M1851.6 682.6 V693.7 M1856.9 682.6 V693.7" fill="none" stroke="#616161" stroke-width="1.6" stroke-linejoin="round" stroke-linecap="round"/></svg>
<div style="position:absolute;left:788.4px;top:758.6999999999999px;width:28.4px;height:28.4px;background:#5b5fc7;border-radius:5.5px;"></div>
<svg style="position:absolute;left:788px;top:759px;" width="30" height="30" viewBox="788 759 30 30"><path d="M796.6 773.20 L800.9 777.40 L808.9 768.80" fill="none" stroke="#fff" stroke-width="2.5" stroke-linecap="round" stroke-linejoin="round"/></svg>
<div class="t" style="top:756.74px;left:837.5px;transform-origin:0 50%;font-size:25px;line-height:32px;font-weight:400;color:#242424;transform:scaleX(0.9513);">Make calls</div>
<div style="position:absolute;left:788.4px;top:815.1999999999999px;width:28.4px;height:28.4px;background:#5b5fc7;border-radius:5.5px;"></div>
<svg style="position:absolute;left:788px;top:815px;" width="30" height="30" viewBox="788 815 30 30"><path d="M796.6 829.70 L800.9 833.90 L808.9 825.30" fill="none" stroke="#fff" stroke-width="2.5" stroke-linecap="round" stroke-linejoin="round"/></svg>
<div class="t" style="top:813.24px;left:837.5px;transform-origin:0 50%;font-size:25px;line-height:32px;font-weight:400;color:#242424;transform:scaleX(0.9153);">Receive calls</div>
<div style="position:absolute;left:788.4px;top:871.6999999999999px;width:28.4px;height:28.4px;background:#5b5fc7;border-radius:5.5px;"></div>
<svg style="position:absolute;left:788px;top:872px;" width="30" height="30" viewBox="788 872 30 30"><path d="M796.6 886.20 L800.9 890.40 L808.9 881.80" fill="none" stroke="#fff" stroke-width="2.5" stroke-linecap="round" stroke-linejoin="round"/></svg>
<div class="t" style="top:869.74px;left:837.5px;transform-origin:0 50%;font-size:25px;line-height:32px;font-weight:400;color:#242424;transform:scaleX(0.945);">Join active calls</div>
<div style="position:absolute;left:788.4px;top:928.1999999999999px;width:28.4px;height:28.4px;background:#5b5fc7;border-radius:5.5px;"></div>
<svg style="position:absolute;left:788px;top:928px;" width="30" height="30" viewBox="788 928 30 30"><path d="M796.6 942.70 L800.9 946.90 L808.9 938.30" fill="none" stroke="#fff" stroke-width="2.5" stroke-linecap="round" stroke-linejoin="round"/></svg>
<div class="t" style="top:926.24px;left:837.5px;transform-origin:0 50%;font-size:25px;line-height:32px;font-weight:400;color:#242424;transform:scaleX(0.9735);">Picked up held call</div>
<div style="position:absolute;left:788.4px;top:984.6999999999999px;width:28.4px;height:28.4px;background:#5b5fc7;border-radius:5.5px;"></div>
<svg style="position:absolute;left:788px;top:985px;" width="30" height="30" viewBox="788 985 30 30"><path d="M796.6 999.20 L800.9 1003.40 L808.9 994.80" fill="none" stroke="#fff" stroke-width="2.5" stroke-linecap="round" stroke-linejoin="round"/></svg>
<div class="t" style="top:982.74px;left:837.5px;transform-origin:0 50%;font-size:25px;line-height:32px;font-weight:400;color:#242424;transform:scaleX(0.9741);">Change call and delegate settings</div>
</body></html>
